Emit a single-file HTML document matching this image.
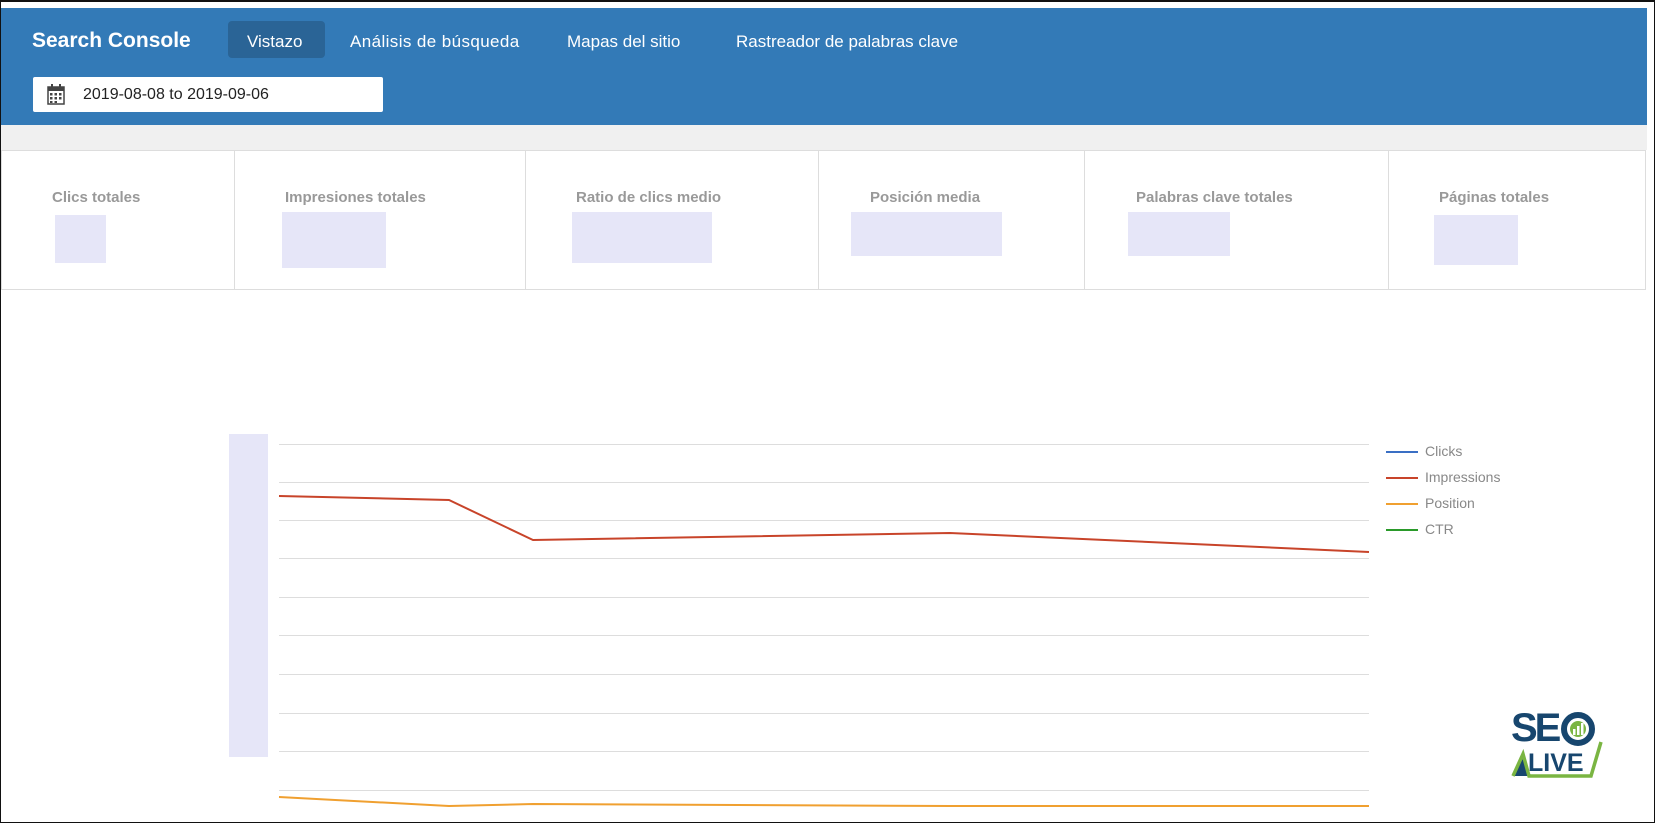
<!DOCTYPE html>
<html><head><meta charset="utf-8"><style>
*{margin:0;padding:0;box-sizing:border-box}
body{width:1655px;height:823px;position:relative;overflow:hidden;background:#fff;font-family:"Liberation Sans",sans-serif}
.a{position:absolute}
.frame{left:0;top:0;width:1655px;height:823px;border:1px solid #111;border-top:2px solid #111}
.hdr{left:1px;top:8px;width:1646px;height:117px;background:#337ab7}
.nav{color:#fff;font-size:17px;top:32px}
.lab{top:189px;font-size:15px;font-weight:bold;color:#999}
.ph{background:#e6e6f8}
.div{top:150px;width:1px;height:140px;background:#ddd}
.g{left:279px;width:1090px;height:1px;background:#ddd}
.lg{font-size:14px;color:#888;left:1425px}
.ll{left:1386px;width:32px;height:2px}
</style></head><body>
<div class="a" style="left:1px;top:125px;width:1646px;height:25px;background:#f0f0f0"></div>
<div class="a hdr"></div>
<div class="a" style="left:32px;top:29px;color:#fff;font-size:21px;font-weight:bold">Search Console</div>
<div class="a" style="left:228px;top:21px;width:97px;height:37px;background:#2a6496;border-radius:4px"></div>
<div class="a nav" style="left:247px">Vistazo</div>
<div class="a nav" style="left:350px;letter-spacing:0.4px">Análisis de búsqueda</div>
<div class="a nav" style="left:567px">Mapas del sitio</div>
<div class="a nav" style="left:736px">Rastreador de palabras clave</div>
<div class="a" style="left:33px;top:77px;width:350px;height:35px;background:#fff;border-radius:2px"></div>
<svg class="a" style="left:47px;top:84px" width="18" height="21" viewBox="0 0 18 21"><rect x="1" y="3" width="16" height="17" fill="none" stroke="#444" stroke-width="1.5"/><rect x="1" y="3" width="16" height="4" fill="#444"/><rect x="4" y="0" width="2" height="5" fill="#444"/><rect x="12" y="0" width="2" height="5" fill="#444"/><g fill="#444"><rect x="3" y="9" width="2.5" height="2.5"/><rect x="7.5" y="9" width="2.5" height="2.5"/><rect x="12" y="9" width="2.5" height="2.5"/><rect x="3" y="13" width="2.5" height="2.5"/><rect x="7.5" y="13" width="2.5" height="2.5"/><rect x="12" y="13" width="2.5" height="2.5"/><rect x="3" y="17" width="2.5" height="2"/><rect x="7.5" y="17" width="2.5" height="2"/></g></svg>
<div class="a" style="left:83px;top:86px;font-size:16px;color:#222">2019-08-08 to 2019-09-06</div>
<div class="a" style="left:1px;top:150px;width:1645px;height:140px;border:1px solid #ddd"></div>
<div class="a div" style="left:234px"></div><div class="a div" style="left:525px"></div><div class="a div" style="left:818px"></div><div class="a div" style="left:1084px"></div><div class="a div" style="left:1388px"></div>
<div class="a lab" style="left:52px">Clics totales</div>
<div class="a lab" style="left:285px">Impresiones totales</div>
<div class="a lab" style="left:576px">Ratio de clics medio</div>
<div class="a lab" style="left:870px">Posición media</div>
<div class="a lab" style="left:1136px">Palabras clave totales</div>
<div class="a lab" style="left:1439px">Páginas totales</div>
<div class="a ph" style="left:55px;top:215px;width:51px;height:48px"></div>
<div class="a ph" style="left:282px;top:212px;width:104px;height:56px"></div>
<div class="a ph" style="left:572px;top:212px;width:140px;height:51px"></div>
<div class="a ph" style="left:851px;top:212px;width:151px;height:44px"></div>
<div class="a ph" style="left:1128px;top:212px;width:102px;height:44px"></div>
<div class="a ph" style="left:1434px;top:215px;width:84px;height:50px"></div>
<div class="a ph" style="left:229px;top:434px;width:39px;height:323px"></div>
<div class="a g" style="top:444px"></div><div class="a g" style="top:482px"></div><div class="a g" style="top:520px"></div><div class="a g" style="top:558px"></div><div class="a g" style="top:597px"></div><div class="a g" style="top:635px"></div><div class="a g" style="top:674px"></div><div class="a g" style="top:713px"></div><div class="a g" style="top:751px"></div><div class="a g" style="top:790px"></div>
<svg class="a" style="left:0;top:0" width="1655" height="823"><polyline points="279,496 449,500 533,540 950,533 1369,552" fill="none" stroke="#c8442a" stroke-width="2"/><polyline points="279,797 449,806 533,804 950,806 1369,806" fill="none" stroke="#f0a030" stroke-width="2"/></svg>
<div class="a ll" style="top:451px;background:#3a6fc4"></div><div class="a lg" style="top:443px">Clicks</div>
<div class="a ll" style="top:477px;background:#c8442a"></div><div class="a lg" style="top:469px">Impressions</div>
<div class="a ll" style="top:503px;background:#f0a030"></div><div class="a lg" style="top:495px">Position</div>
<div class="a ll" style="top:529px;background:#2a9a2a"></div><div class="a lg" style="top:521px">CTR</div>
<div class="a" style="left:1511px;top:708px;font-size:40px;font-weight:bold;color:#17466e;letter-spacing:-3px;line-height:40px">SE</div>
<svg class="a" style="left:1560px;top:711px" width="36" height="36"><circle cx="18" cy="18" r="14" fill="none" stroke="#17466e" stroke-width="6"/><circle cx="18" cy="18" r="8" fill="#7ab542"/><g fill="#fff"><rect x="13" y="18" width="2.5" height="6"/><rect x="17" y="15" width="2.5" height="9"/><rect x="21" y="12" width="2.5" height="12"/></g></svg>
<svg class="a" style="left:1511px;top:736px" width="92" height="42"><polygon points="3,40 12,22 20,40" fill="#17466e"/><polyline points="2,40 12,18 18,40 80,40 90,6" fill="none" stroke="#7ab542" stroke-width="3.5"/></svg>
<div class="a" style="left:1528px;top:751px;font-size:25px;font-weight:bold;color:#17466e;line-height:25px">LIVE</div>
<div class="a frame"></div>
</body></html>
